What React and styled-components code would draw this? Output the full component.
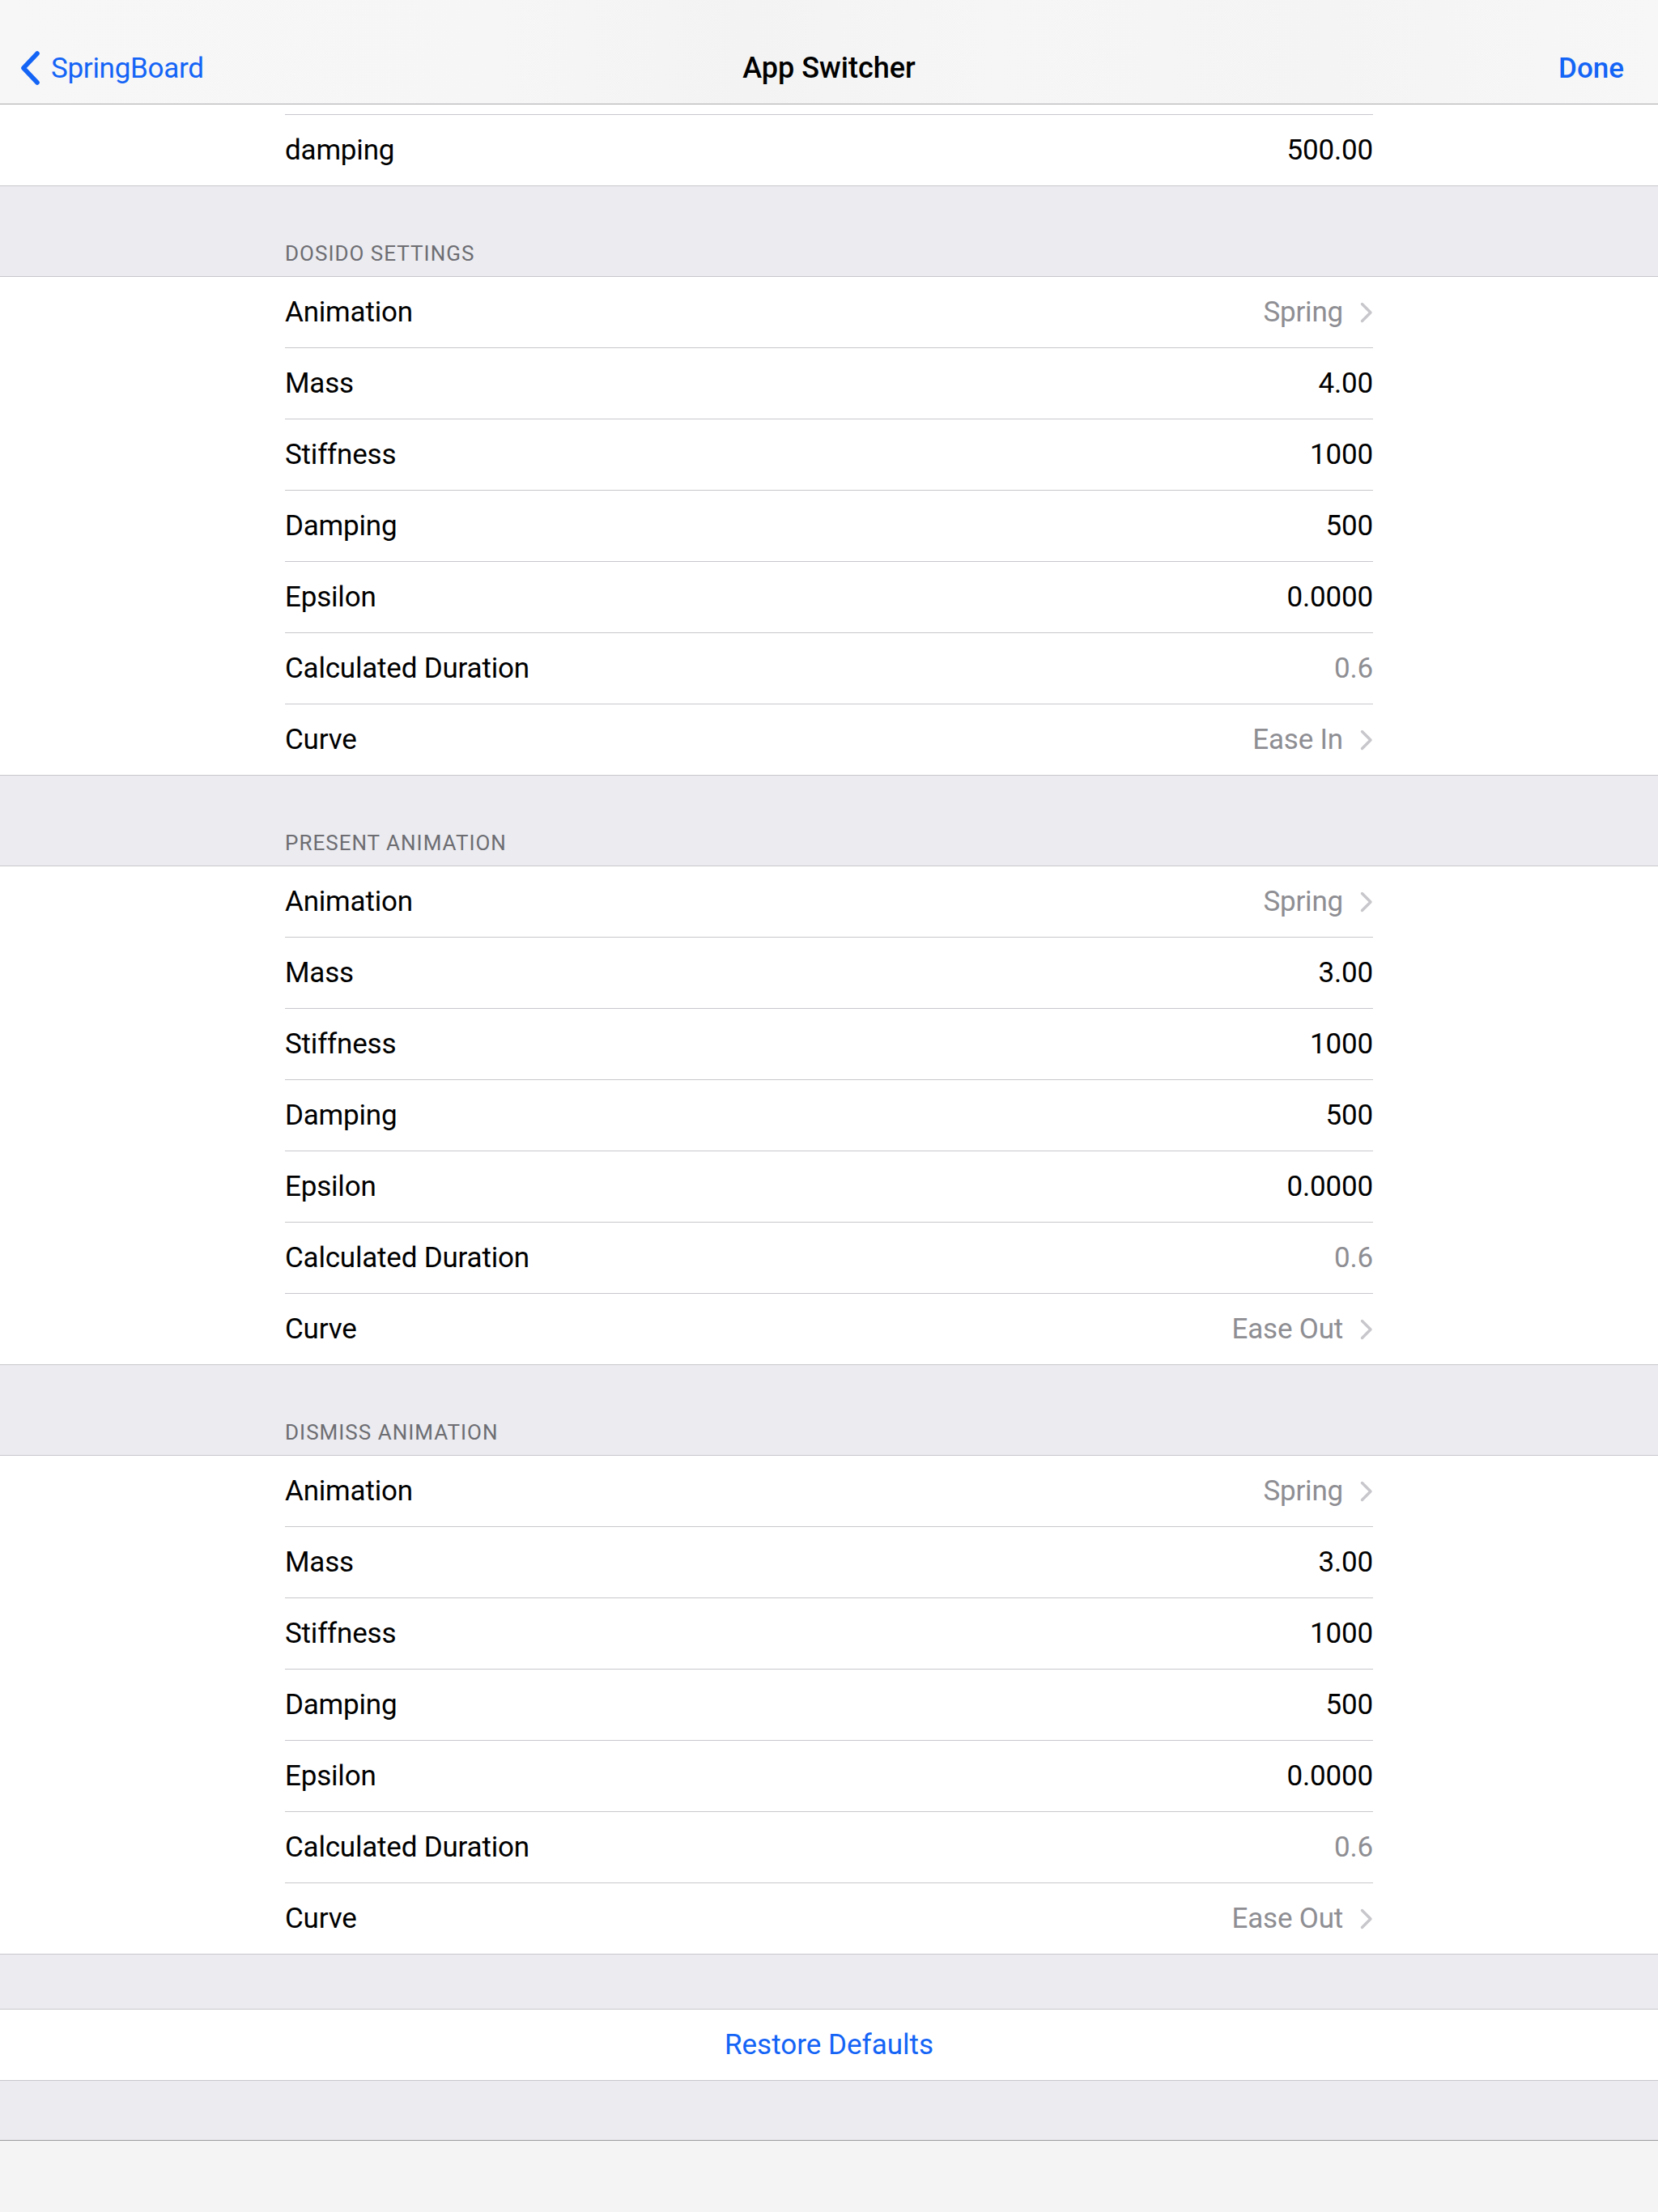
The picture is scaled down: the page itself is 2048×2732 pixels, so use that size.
import React from "react";
import styled, {createGlobalStyle} from "styled-components";

const sections = [
    {
        title: "Dosido Settings",
        rows: [
            {label: "Animation", value: "Spring", link: true},
            {label: "Mass", value: "4.00"},
            {label: "Stiffness", value: "1000"},
            {label: "Damping", value: "500"},
            {label: "Epsilon", value: "0.0000"},
            {label: "Calculated Duration", value: "0.6", muted: true},
            {label: "Curve", value: "Ease In", link: true},
        ],
    },
    {
        title: "Present Animation",
        rows: [
            {label: "Animation", value: "Spring", link: true},
            {label: "Mass", value: "3.00"},
            {label: "Stiffness", value: "1000"},
            {label: "Damping", value: "500"},
            {label: "Epsilon", value: "0.0000"},
            {label: "Calculated Duration", value: "0.6", muted: true},
            {label: "Curve", value: "Ease Out", link: true},
        ],
    },
    {
        title: "Dismiss Animation",
        rows: [
            {label: "Animation", value: "Spring", link: true},
            {label: "Mass", value: "3.00"},
            {label: "Stiffness", value: "1000"},
            {label: "Damping", value: "500"},
            {label: "Epsilon", value: "0.0000"},
            {label: "Calculated Duration", value: "0.6", muted: true},
            {label: "Curve", value: "Ease Out", link: true},
        ],
    },
];

const Chevron = () => (
    <svg width="16" height="26" viewBox="0 0 16 26">
        <path d="M2.5 2.5 L13 13 L2.5 23.5" fill="none" stroke="#c7c7cc" strokeWidth="3.4"
              strokeLinecap="round" strokeLinejoin="round"/>
    </svg>
);

const BackChevron = () => (
    <svg width="26" height="42" viewBox="0 0 26 42">
        <path d="M22 3 L5 21 L22 39" fill="none" stroke="#1464f6" strokeWidth="5.6"
              strokeLinecap="round" strokeLinejoin="round"/>
    </svg>
);

const SettingRow = ({label, value, muted, link, last}) => (
    <Row>
        <RowInner $last={last}>
            <Label>{label}</Label>
            <Detail>
                <Value $muted={muted || link}>{value}</Value>
                {link && <Chevron/>}
            </Detail>
        </RowInner>
    </Row>
);

const App = () => {
    return (
        <Page>
            <GlobalStyle/>
            <NavBar>
                <BackButton>
                    <BackChevron/>
                    <span>SpringBoard</span>
                </BackButton>
                <NavTitle>App Switcher</NavTitle>
                <DoneButton>Done</DoneButton>
            </NavBar>
            <Content>
                {/* tail of the previous group, scrolled under the bar */}
                <Group $noTop>
                    <Row>
                        <Stub/>
                    </Row>
                    <SettingRow label="damping" value="500.00" last/>
                </Group>
                {sections.map((section) => (
                    <React.Fragment key={section.title}>
                        <SectionHeader>
                            <HeaderText>{section.title}</HeaderText>
                        </SectionHeader>
                        <Group>
                            {section.rows.map((row, i) => (
                                <SettingRow
                                    key={row.label}
                                    {...row}
                                    last={i === section.rows.length - 1}
                                />
                            ))}
                        </Group>
                    </React.Fragment>
                ))}
                <Gap/>
                <Group>
                    <ButtonRow>Restore Defaults</ButtonRow>
                </Group>
            </Content>
            <Toolbar/>
        </Page>
    );
};

const GlobalStyle = createGlobalStyle`
  html, body {
    margin: 0;
    padding: 0;
    background: #ebebf0;
  }
  body {
    font-family: "Roboto", "Liberation Sans", sans-serif;
    -webkit-font-smoothing: antialiased;
  }
`;

const Page = styled.div`
  height: 2732px;
  display: flex;
  flex-direction: column;
  background: #ebebf0;
  overflow: hidden;
`;

const NavBar = styled.div`
  height: 88px;
  padding-top: 40px;
  display: grid;
  grid-template-columns: 1fr auto 1fr;
  align-items: center;
  background: linear-gradient(90deg, #f7f7f7 0%, #f6f6f6 30%, #f3f3f3 45%, #f6f6f6 60%, #f4f4f4 80%, #f7f7f7 100%);
  border-bottom: 1px solid #a9a9ac;
`;

const BackButton = styled.div`
  display: flex;
  align-items: center;
  gap: 13px;
  padding-left: 24px;
  font-size: 35px;
  color: #1464f6;
  letter-spacing: -0.3px;
`;

const NavTitle = styled.div`
  font-size: 36px;
  font-weight: 500;
  color: #000;
`;

const DoneButton = styled.div`
  justify-self: end;
  padding-right: 42px;
  font-size: 35px;
  font-weight: 500;
  color: #1464f6;
`;

const Content = styled.div`
  flex: 1;
  display: flex;
  flex-direction: column;
`;

const Group = styled.div`
  background: #fff;
  border-top: ${(p) => (p.$noTop ? "none" : "1px solid #c8c7cc")};
  border-bottom: 1px solid #c8c7cc;
`;

const Row = styled.div`
  background: #fff;
`;

const RowInner = styled.div`
  margin: 0 352px;
  height: 87px;
  display: flex;
  align-items: center;
  justify-content: space-between;
  border-bottom: ${(p) => (p.$last ? "none" : "1px solid #c8c7cc")};
`;

const Stub = styled.div`
  margin: 0 352px;
  height: 12px;
  border-bottom: 1px solid #c8c7cc;
`;

const Label = styled.span`
  font-size: 35px;
  line-height: 1;
  color: #000;
  letter-spacing: -0.2px;
`;

const Detail = styled.div`
  display: flex;
  align-items: center;
  gap: 21px;
`;

const Value = styled.span`
  font-size: 35px;
  line-height: 1;
  color: ${(p) => (p.$muted ? "#8e8e93" : "#000")};
  letter-spacing: -0.2px;
`;

const SectionHeader = styled.div`
  height: 111px;
  display: flex;
  align-items: flex-end;
  padding: 0 352px 13px;
  box-sizing: border-box;
`;

const HeaderText = styled.span`
  font-size: 26px;
  color: #6d6d72;
  text-transform: uppercase;
  letter-spacing: 1px;
`;

const Gap = styled.div`
  height: 67px;
`;

const ButtonRow = styled.div`
  height: 87px;
  display: flex;
  align-items: center;
  justify-content: center;
  font-size: 35px;
  color: #1464f6;
`;

const Toolbar = styled.div`
  height: 88px;
  background: #f4f4f5;
  border-top: 1px solid #9c9ca0;
`;

export default App;
